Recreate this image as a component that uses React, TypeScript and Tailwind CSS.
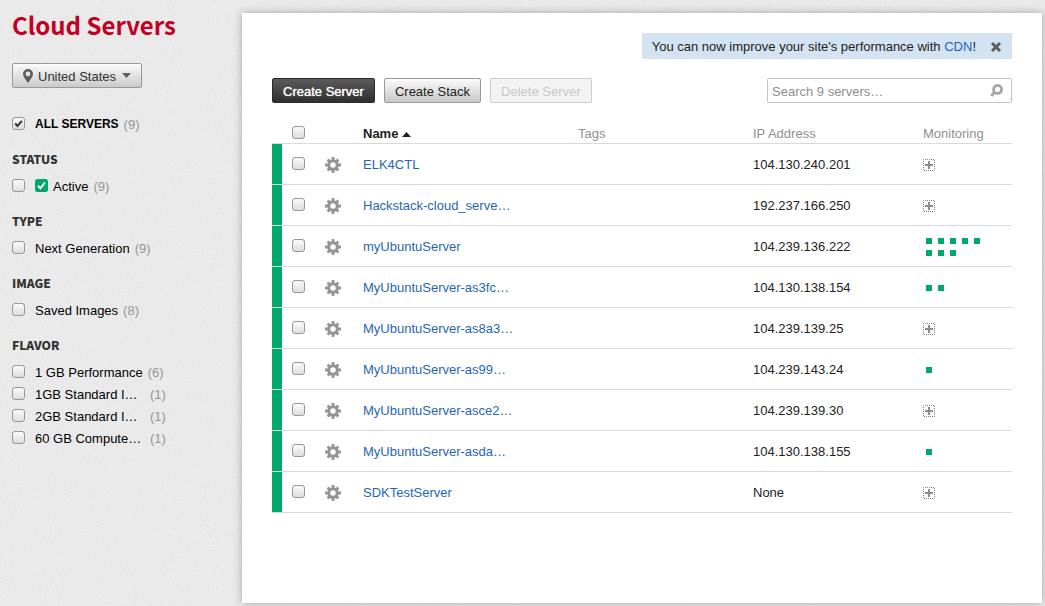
import { useId, useState } from 'react';
import type { ReactNode } from 'react';

type Server = { name: string; ip: string; checks: number };
type Filter = { label: string; count: number; clipped?: boolean; ok?: boolean };

const servers: Server[] = [
  { name: 'ELK4CTL', ip: '104.130.240.201', checks: 0 },
  { name: 'Hackstack-cloud_serve…', ip: '192.237.166.250', checks: 0 },
  { name: 'myUbuntuServer', ip: '104.239.136.222', checks: 8 },
  { name: 'MyUbuntuServer-as3fc…', ip: '104.130.138.154', checks: 2 },
  { name: 'MyUbuntuServer-as8a3…', ip: '104.239.139.25', checks: 0 },
  { name: 'MyUbuntuServer-as99…', ip: '104.239.143.24', checks: 1 },
  { name: 'MyUbuntuServer-asce2…', ip: '104.239.139.30', checks: 0 },
  { name: 'MyUbuntuServer-asda…', ip: '104.130.138.155', checks: 1 },
  { name: 'SDKTestServer', ip: 'None', checks: 0 },
];

const sections: { title: string; filters: Filter[] }[] = [
  { title: 'STATUS', filters: [{ label: 'Active', count: 9, ok: true }] },
  { title: 'TYPE', filters: [{ label: 'Next Generation', count: 9 }] },
  { title: 'IMAGE', filters: [{ label: 'Saved Images', count: 8 }] },
  {
    title: 'FLAVOR',
    filters: [
      { label: '1 GB Performance', count: 6 },
      { label: '1GB Standard I…', count: 1, clipped: true },
      { label: '2GB Standard I…', count: 1, clipped: true },
      { label: '60 GB Compute…', count: 1, clipped: true },
    ],
  },
];

function Checkbox({ id, label, initial = false }: { id?: string; label?: string; initial?: boolean }) {
  const [checked, setChecked] = useState(initial);
  return (
    <span className="grid size-[13px] shrink-0">
      <input
        id={id}
        type="checkbox"
        aria-label={label}
        checked={checked}
        onChange={(e) => setChecked(e.target.checked)}
        className="col-start-1 row-start-1 size-[13px] appearance-none rounded-[3px] border border-[#979797] bg-linear-to-b from-[#fbfbfb] to-[#dedede]"
      />
      {checked && (
        <svg viewBox="0 0 13 13" className="pointer-events-none col-start-1 row-start-1 size-[13px]" aria-hidden="true">
          <path d="M3.2 6.5 5.5 9 10 3.8" fill="none" stroke="#333" strokeWidth="2" />
        </svg>
      )}
    </span>
  );
}

function PinIcon() {
  return (
    <svg viewBox="0 0 10 14" className="h-3.5 w-2.5" aria-hidden="true">
      <path
        fillRule="evenodd"
        fill="#5c5c5c"
        d="M5 0a5 5 0 0 1 5 5c0 2.6-2.6 5.4-5 9C2.6 10.4 0 7.6 0 5a5 5 0 0 1 5-5Zm0 2.6a2.4 2.4 0 1 0 0 4.8a2.4 2.4 0 0 0 0-4.8Z"
      />
    </svg>
  );
}

function GearIcon() {
  return (
    <svg viewBox="0 0 16 16" className="size-4" fill="none" stroke="#959595" aria-hidden="true">
      <circle cx="8" cy="8" r="4.3" strokeWidth="3.1" />
      <g strokeWidth="2.8">
        <path d="M8 0v4M8 12v4M0 8h4M12 8h4" />
        <path d="M2.6 2.6l2.4 2.4M11 11l2.4 2.4M13.4 2.6l-2.4 2.4M5 11l-2.4 2.4" />
      </g>
    </svg>
  );
}

function PlusIcon() {
  return (
    <svg viewBox="0 0 12 12" className="size-3" aria-hidden="true">
      <rect x="0.5" y="0.5" width="11" height="11" fill="none" stroke="#808080" strokeDasharray="1 1" strokeDashoffset="0.5" />
      <path d="M5 2h2v3h3v2H7v3H5V7H2V5h3Z" fill="#8c8c8c" />
    </svg>
  );
}

function FilterRow({ children, filter, initial }: { children: ReactNode; filter: Filter; initial?: boolean }) {
  const id = useId();
  return (
    <div className="flex h-[22px] items-start pt-1">
      <Checkbox id={id} initial={initial} />
      <label htmlFor={id} className="ml-2.5 flex items-start gap-[5px] leading-[15px]">
        {filter.ok && (
          <svg viewBox="0 0 13 13" className="size-[13px]" aria-hidden="true">
            <rect width="13" height="13" rx="2.5" fill="#00a86b" />
            <path d="M3 6.7 5.4 9.3 10 3.5" fill="none" stroke="#fff" strokeWidth="2" />
          </svg>
        )}
        {children}
        <span className="text-[#959595]">({filter.count})</span>
      </label>
    </div>
  );
}

function Sidebar() {
  return (
    <aside className="relative w-[242px] shrink-0 pl-3">
      <h1 className="h-[50px] font-['Noto_Sans_CJK_SC',sans-serif] text-[24px] leading-[50px] font-bold text-[#c40022]">
        Cloud Servers
      </h1>
      <div className="mt-[13px] grid h-[25px] w-[130px]">
        <select
          aria-label="Region"
          className="col-start-1 row-start-1 appearance-none rounded-[2px] border border-[#999] bg-linear-to-b from-[#fbfbfb] to-[#cbcbcb] pt-0.5 pl-[25px] text-[13px] text-[#333]"
        >
          <option>United States</option>
        </select>
        <span className="pointer-events-none col-start-1 row-start-1 flex items-center justify-between px-[11px]">
          <PinIcon />
          <svg viewBox="0 0 9 5" className="h-[5px] w-[9px]" aria-hidden="true">
            <path d="M0 0h9L4.5 5Z" fill="#5c5c5c" />
          </svg>
        </span>
      </div>
      <div className="mt-[25px]">
        <FilterRow filter={{ label: 'ALL SERVERS', count: 9 }} initial>
          <span className="text-[12px] font-bold">ALL SERVERS</span>
        </FilterRow>
      </div>
      {sections.map((section) => (
        <section key={section.title} className="mt-[15px]">
          <h2 className="mb-[5px] h-5 font-['Noto_Sans_CJK_SC',sans-serif] text-[12px] leading-[18px] font-black text-[#333]">
            {section.title}
          </h2>
          {section.filters.map((f) => (
            <FilterRow key={f.label} filter={f}>
              {f.clipped ? <span className="w-[110px]">{f.label}</span> : <span>{f.label}</span>}
            </FilterRow>
          ))}
        </section>
      ))}
    </aside>
  );
}

function ServerTable() {
  return (
    <table className="mt-[18px] w-full table-fixed border-collapse text-left text-[#333]">
      <colgroup>
        <col className="w-2.5" />
        <col className="w-[43px]" />
        <col className="w-[38px]" />
        <col className="w-[215px]" />
        <col />
        <col className="w-[170px]" />
        <col className="w-[89px]" />
      </colgroup>
      <thead>
        <tr className="h-[22px] border-b border-[#d9d9d9] text-[#8f8f8f]">
          <th />
          <th className="pt-0.5 pl-2.5">
            <Checkbox label="Select all servers" />
          </th>
          <th />
          <th className="pt-1 font-bold text-[#222]">
            <button type="button" className="flex items-center gap-1">
              Name
              <svg viewBox="0 0 9 5" className="mt-0.5 h-[5px] w-[9px]" aria-hidden="true">
                <path d="M0 5h9L4.5 0Z" fill="#222" />
              </svg>
            </button>
          </th>
          <th className="pt-1 font-normal">Tags</th>
          <th className="pt-1 font-normal">IP Address</th>
          <th className="pt-1 font-normal">Monitoring</th>
        </tr>
      </thead>
      <tbody>
        {servers.map((s) => (
          <tr key={s.name} className="h-[41px] border-b border-[#d9d9d9]">
            <td className="bg-[#00a86b] bg-clip-padding" />
            <td className="pl-2.5">
              <Checkbox label={`Select ${s.name}`} />
            </td>
            <td>
              <button type="button" aria-label={`Actions for ${s.name}`} className="block pt-0.5">
                <GearIcon />
              </button>
            </td>
            <td className="pt-0.5">
              <a href="#server" className="text-[#1f66b8]">{s.name}</a>
            </td>
            <td />
            <td className="pt-0.5 text-[#222]">{s.ip}</td>
            <td className="pt-[3px]">
              {s.checks === 0 ? (
                <button type="button" aria-label={`Add monitoring to ${s.name}`} className="block">
                  <PlusIcon />
                </button>
              ) : (
                <div className="grid w-[57px] grid-cols-5 gap-1.5 pl-[3px]">
                  {Array.from({ length: s.checks }, (_, i) => (
                    <span key={i} className="size-1.5 bg-[#00a86b]" />
                  ))}
                </div>
              )}
            </td>
          </tr>
        ))}
      </tbody>
    </table>
  );
}

/* Fine paper grain behind the whole page. */
function Grain() {
  return (
    <svg className="pointer-events-none absolute inset-0 h-full w-full" aria-hidden="true">
      <filter id="grain">
        <feTurbulence type="fractalNoise" baseFrequency="0.6" numOctaves="2" />
        <feColorMatrix values="0 0 0 0 0  0 0 0 0 0  0 0 0 0 0  0.06 0 0 0 -0.02" />
      </filter>
      <rect width="100%" height="100%" filter="url(#grain)" />
    </svg>
  );
}

export default function App() {
  return (
    <div className="relative flex min-h-screen bg-[#ececec] pr-[3px] pb-[3px] font-['Liberation_Sans',Arial,sans-serif] text-[13px] leading-4 text-black">
      <Grain />
      <Sidebar />
      <main className="relative mt-[13px] min-w-0 flex-1 bg-white px-[30px] pt-5 shadow-[0_0_8px_rgba(0,0,0,0.3)]">
        <div className="ml-auto flex h-[26px] w-fit items-center bg-[#d3e3f2] px-2.5 pt-0.5 text-[#222]">
          <p>
            You can now improve your site's performance with{' '}
            <a href="#cdn" className="text-[#1f66b8]">CDN</a>!
          </p>
          <button type="button" aria-label="Dismiss" className="ml-3.5">
            <svg viewBox="0 0 12 12" className="size-3" aria-hidden="true">
              <path d="M2 2l8 8M10 2l-8 8" stroke="#5c5c5c" strokeWidth="3" />
            </svg>
          </button>
        </div>
        <div className="mt-[19px] flex items-center gap-[9px]">
          <button type="button" className="h-[25px] rounded-[2px] border border-[#2b2b2b] bg-linear-to-b from-[#5c5c5c] to-[#2f2f2f] px-2.5 pt-0.5 text-white [text-shadow:0_0_1px_#fff]">
            Create Server
          </button>
          <button type="button" className="h-[25px] rounded-[2px] border border-[#999] bg-linear-to-b from-[#fbfbfb] to-[#c8c8c8] px-2.5 pt-0.5 text-[#222]">
            Create Stack
          </button>
          <button type="button" disabled className="h-[25px] rounded-[2px] border border-[#ccc] bg-[#f3f3f3] px-2.5 pt-0.5 text-[#c8c8c8]">
            Delete Server
          </button>
          <div className="ml-auto flex h-[25px] w-[245px] items-center rounded-[2px] border border-[#c4c4c4] bg-white pr-2 pl-1">
            <input
              type="search"
              aria-label="Search servers"
              placeholder="Search 9 servers…"
              className="min-w-0 flex-1 pt-0.5 outline-none placeholder:text-[#8f8f8f]"
            />
            <svg viewBox="0 0 13 13" className="size-[13px]" fill="none" stroke="#a6a6a6" aria-hidden="true">
              <circle cx="7.6" cy="5.4" r="4" strokeWidth="2.8" />
              <path d="M4.7 8.3 1.2 11.8" strokeWidth="3" />
            </svg>
          </div>
        </div>
        <ServerTable />
      </main>
    </div>
  );
}
